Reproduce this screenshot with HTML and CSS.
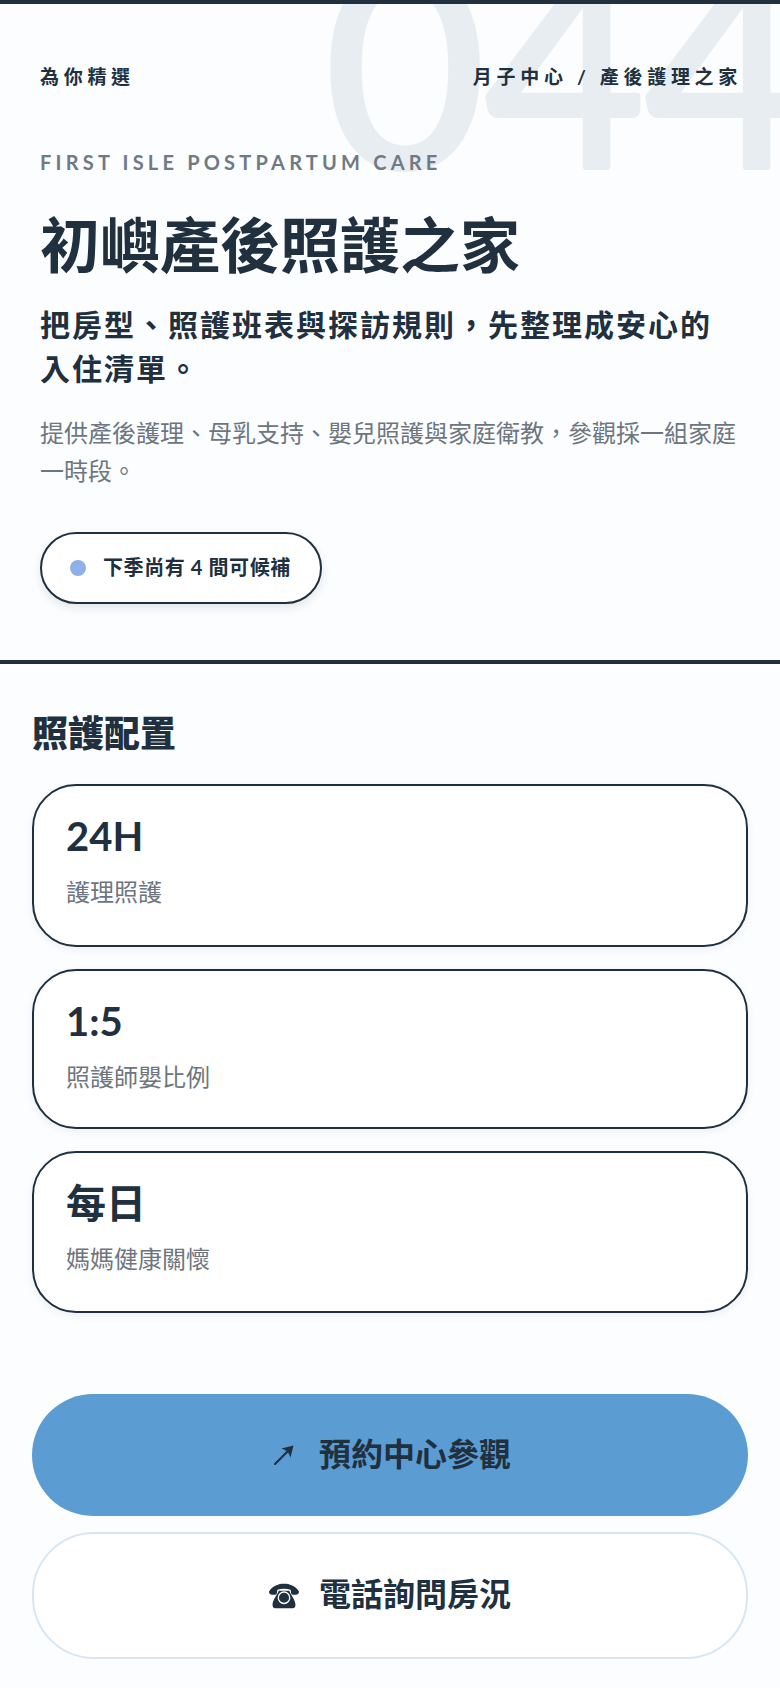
FILE: index.html
```html
<!DOCTYPE html>
<html lang="zh-Hant">
<head>
  <meta charset="utf-8">
  <title>初嶼產後照護之家</title>
  <link rel="stylesheet" href="styles.css">
</head>
<body>
  <header class="hero">
    <svg class="bignum" width="780" height="200" aria-hidden="true"><text x="325" y="163">044</text></svg>
    <div class="topline">
      <span>為你精選</span>
      <span>月子中心 / 產後護理之家</span>
    </div>
    <p class="kicker">FIRST ISLE POSTPARTUM CARE</p>
    <h1>初嶼產後照護之家</h1>
    <p class="lead">把房型、照護班表與探訪規則，先整理成安心的入住清單。</p>
    <p class="desc">提供產後護理、母乳支持、嬰兒照護與家庭衛教，參觀採一組家庭一時段。</p>
    <div class="pill"><span class="dot"></span><span class="pill-label">下季尚有 4 間可候補</span></div>
  </header>

  <section class="care">
    <h2>照護配置</h2>
    <div class="stats">
      <div class="stat stat-first"><strong>24H</strong><span>護理照護</span></div>
      <div class="stat stat-short"><strong>1:5</strong><span>照護師嬰比例</span></div>
      <div class="stat"><strong>每日</strong><span>媽媽健康關懷</span></div>
    </div>
  </section>

  <div class="actions">
    <a class="btn btn-main">
      <span class="btn-icon">
        <svg width="20" height="20" viewBox="0 0 20 20">
          <path d="M1 19 L15 5" stroke="#20303f" stroke-width="2.2" stroke-linecap="round"/>
          <path d="M19.5 0.5 L7.5 3.5 L12 5.5 L14.5 8 L16.5 12.5 Z" fill="#20303f"/>
        </svg>
      </span>
      <span class="btn-label">預約中心參觀</span>
    </a>
    <a class="btn btn-line">
      <span class="btn-icon">
        <svg width="34" height="28" viewBox="0 0 34 28">
          <path d="M0 9 C4 2 11 0 17 0 C23 0 30 2 34 9 C34 11 33 12.5 31 12.5 L27 12.5 C25.5 12.5 25 11.5 25 10 L24.5 7 C20 5.5 14 5.5 9.5 7 L9 10 C9 11.5 8.5 12.5 7 12.5 L3 12.5 C1 12.5 0 11 0 9 Z" fill="#20303f"/>
          <path d="M11 8 L23 8 C24 12 30 18 30 24 C30 26.5 29 28 27 28 L7 28 C5 28 4 26.5 4 24 C4 18 10 12 11 8 Z" fill="#20303f"/>
          <circle cx="17" cy="16" r="6.5" fill="none" stroke="#fff" stroke-width="1.5"/>
        </svg>
      </span>
      <span class="btn-label">電話詢問房況</span>
    </a>
  </div>
</body>
</html>
```

FILE: styles.css
```css
* {
  box-sizing: border-box;
}

body {
  margin: 0;
  background: #fbfdff;
  color: #20303f;
  font-family: "Lato", "Noto Sans CJK TC", sans-serif;
}

.hero {
  position: relative;
  overflow: hidden;
  height: 664px;
  padding: 61px 40px 0;
  border-top: 4px solid #20303f;
  border-bottom: 4px solid #20303f;
}

.bignum {
  position: absolute;
  top: 0;
  left: 0;
}

.bignum text {
  font-family: "Lato", sans-serif;
  font-size: 276px;
  font-weight: 400;
  fill: #e8edf1;
  stroke: #e8edf1;
  stroke-width: 6px;
  stroke-linejoin: round;
}

.topline {
  position: relative;
  display: flex;
  justify-content: space-between;
  margin-right: -2px;
  font-size: 19px;
  line-height: 24px;
  font-weight: 700;
  letter-spacing: 4.7px;
}

.kicker {
  position: relative;
  margin: 60px 0 0;
  font-size: 20px;
  line-height: 26px;
  letter-spacing: 4.2px;
  font-weight: 700;
  color: #707a84;
}

h1 {
  position: relative;
  margin: 32px 0 0;
  font-size: 60px;
  line-height: 76px;
  font-weight: 700;
}

.lead {
  margin: 19px 0 0;
  font-size: 30px;
  line-height: 44px;
  letter-spacing: 2px;
  font-weight: 700;
}

.desc {
  margin: 24px 0 0;
  font-size: 24px;
  line-height: 38px;
  color: #6d7680;
}

.pill {
  display: flex;
  align-items: center;
  gap: 17px;
  width: 282px;
  height: 72px;
  margin-top: 42px;
  padding: 0 28px;
  background: #fff;
  border: 2px solid #20303f;
  border-radius: 36px;
  box-shadow: 0 4px 10px rgba(32, 48, 63, 0.1);
  font-size: 20px;
  font-weight: 700;
  letter-spacing: 0.6px;
  white-space: nowrap;
}

.pill-label {
  margin-bottom: 4px;
}

.dot {
  width: 16px;
  height: 16px;
  border-radius: 50%;
  background: #8fb0e8;
}

.care {
  padding: 44px 32px 0;
}

h2 {
  margin: 0;
  font-size: 36px;
  line-height: 50px;
  font-weight: 900;
}

.stats {
  display: flex;
  flex-direction: column;
  gap: 22px;
  margin-top: 26px;
}

.stat {
  display: flex;
  flex-direction: column;
  height: 162px;
  padding: 22px 32px 0;
  background: #fff;
  border: 2px solid #20303f;
  border-radius: 44px;
  box-shadow: 0 3px 8px rgba(32, 48, 63, 0.06);
}

.stat-first {
  height: 163px;
}

.stat-short {
  height: 160px;
}

.stat strong {
  font-size: 40px;
  line-height: 56px;
  font-weight: 700;
}

.stat span {
  margin-top: 11px;
  font-size: 24px;
  line-height: 34px;
  color: #6d7680;
}

.actions {
  display: flex;
  flex-direction: column;
  gap: 16px;
  padding: 81px 32px 0;
}

.btn {
  display: flex;
  align-items: center;
  justify-content: center;
  gap: 20px;
  border-radius: 62px;
  font-size: 32px;
  font-weight: 700;
}

.btn-label {
  margin-bottom: 7px;
}

.btn-main {
  height: 122px;
  background: #5b9cd3;
}

.btn-line {
  height: 127px;
  background: #fff;
  border: 2px solid #d8e6f2;
}

.btn-icon {
  display: flex;
  justify-content: center;
  width: 30px;
}
```
